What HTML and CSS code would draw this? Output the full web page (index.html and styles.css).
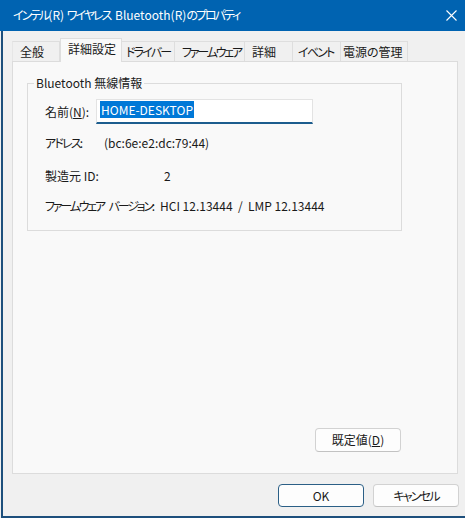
FILE: index.html
```html
<!DOCTYPE html>
<html lang="ja">
<head>
<meta charset="utf-8">
<title>プロパティ</title>
<link rel="stylesheet" href="styles.css">
</head>
<body>
<div class="window">
  <div class="titlebar">
    <span class="title"><span class="k">インテル</span>(R) <span class="k ks">ワイヤレス</span> Bluetooth(R)<span class="k">のプロパティ</span></span>
    <svg class="close" width="11" height="11" viewBox="0 0 11 11"><path d="M0.5 0.5L10.5 10.5M10.5 0.5L0.5 10.5" stroke="#fff" stroke-width="1.1" fill="none"/></svg>
  </div>
  <div class="frame">
    <div class="tabs">
      <div class="tab tab-w48">全般</div>
      <div class="tab tab-sel">詳細設定</div>
      <div class="tab tab-w53"><span class="k">ドライバー</span></div>
      <div class="tab tab-w70"><span class="k k2">ファームウェア</span></div>
      <div class="tab tab-w48">詳細</div>
      <div class="tab tab-w48"><span class="k">イベント</span></div>
      <div class="tab tab-w67">電源の管理</div>
    </div>
    <div class="panel">
      <fieldset class="group">
        <legend>Bluetooth 無線情報</legend>
        <div class="row row-name">
          <span class="lbl lbl-name">名前(<u>N</u>):</span>
          <div class="input"><span class="sel">HOME-DESKTOP</span></div>
        </div>
        <div class="row row-addr">
          <span class="lbl lbl-addr"><span class="k">アドレス</span>:</span>
          <span class="val">(bc:6e:e2:dc:79:44)</span>
        </div>
        <div class="row row-mfr">
          <span class="lbl lbl-mfr">製造元 ID:</span>
          <span class="val">2</span>
        </div>
        <div class="row row-fw">
          <span class="lbl lbl-fw"><span class="k k2 ks">ファームウェア</span> <span class="k k2">バージョン</span>:</span>
          <span class="val">HCI 12.13444 &nbsp;/&nbsp; LMP 12.13444</span>
        </div>
      </fieldset>
      <div class="panel-foot">
        <button class="btn btn-default">既定値(<u>D</u>)</button>
      </div>
    </div>
    <div class="footer">
      <button class="btn btn-ok">OK</button>
      <button class="btn btn-cancel"><span class="k">キャンセル</span></button>
    </div>
  </div>
</div>
</body>
</html>
```

FILE: styles.css
```css
* { box-sizing: border-box; }
html, body {
  margin: 0;
  padding: 0;
}
body {
  width: 465px;
  height: 518px;
  overflow: hidden;
  background: #f0f0f0;
  font-family: "Noto Sans CJK JP", "Noto Sans", sans-serif;
  font-feature-settings: "palt";
  font-size: 12px;
  color: #1a1a1a;
}
.k { letter-spacing: -1.8px; }
.k2 { letter-spacing: -2.2px; }
.ks { margin-right: 2px; }
.window {
  width: 465px;
  height: 518px;
  display: flex;
  flex-direction: column;
}
.titlebar {
  height: 31px;
  flex: none;
  background: #0063b1;
  color: #fff;
  display: flex;
  align-items: center;
  justify-content: space-between;
  padding: 0 8px 1px 13px;
}
.title {
  font-size: 12px;
  line-height: 16px;
  white-space: nowrap;
}
.title .k { letter-spacing: -2px; }
.close { display: block; margin-top: 1px; }
.frame {
  flex: 1;
  margin-left: 1px;
  border-left: 2px solid #1d4f7c;
  border-bottom: 2px solid #1d4f7c;
  padding: 7px 7px 0 9px;
  display: flex;
  flex-direction: column;
  background: #f0f0f0;
}
.tabs {
  display: flex;
  align-items: flex-end;
  height: 23px;
  position: relative;
  z-index: 1;
}
.tab {
  height: 20px;
  padding-left: 7px;
  line-height: 19px;
  border: 1px solid #dedede;
  border-bottom: none;
  border-left: none;
  background: #f0f0f0;
  white-space: nowrap;
  overflow: hidden;
  color: #1a1a1a;
}
.tab:first-child { border-left: 1px solid #e6e6e6; }
.tab-w48 { width: 48px; }
.tab-w53 { width: 53px; padding-left: 4px; }
.tab-w70 { width: 70px; }
.tab-w67 { width: 67px; padding-left: 2px; }
.tab-w48 .k { margin-left: -2px; }
.tab-sel {
  width: 62px;
  height: 24px;
  margin-bottom: -1px;
  background: #f9f9f9;
  border-left: 1px solid #dedede;
  line-height: 19px;
  padding-bottom: 4px;
}
.panel {
  height: 413px;
  flex: none;
  background: #f9f9f9;
  border: 1px solid #dcdcdc;
  display: flex;
  flex-direction: column;
  padding: 0 0 0 14px;
}
.group {
  margin: 13px 0 0 0;
  width: 375px;
  border: 1px solid #dcdcdc;
  padding: 8px 0 17px 17px;
  min-width: 0;
}
.group legend {
  padding: 0 2px;
  margin-left: -11px;
  line-height: 16px;
  color: #1a1a1a;
}
.row {
  display: flex;
  align-items: center;
  height: 16px;
  white-space: nowrap;
}
.row-name { height: 25px; }
.row-addr { margin-top: 10px; }
.row-mfr { margin-top: 17px; }
.row-fw { margin-top: 14px; }
.lbl { flex: none; }
.lbl-name { width: 51px; }
.lbl-addr { width: 59px; }
.lbl-mfr { width: 119px; }
.lbl-fw { width: 115px; }
.input {
  width: 217px;
  height: 25px;
  background: #fff;
  border: 1px solid #e3e3e3;
  border-bottom: 2px solid #1c5d8e;
  padding: 1px 0 0 3px;
  display: flex;
  align-items: flex-start;
}
.sel {
  background: #0078d7;
  color: #fff;
  line-height: 17px;
  padding: 0 1px;
}
.panel-foot {
  margin-top: auto;
  display: flex;
  justify-content: flex-end;
  padding: 0 56px 21px 0;
}
.btn {
  font-family: inherit;
  font-feature-settings: "palt";
  font-size: 12px;
  color: #1a1a1a;
  background: #fdfdfd;
  border: 1px solid #d2d2d2;
  border-bottom-color: #c2c2c2;
  border-radius: 4px;
  padding: 0;
  margin: 0;
  line-height: 16px;
}
.btn-default { width: 86px; height: 24px; }
.footer {
  display: flex;
  justify-content: flex-end;
  gap: 9px;
  padding-top: 10px;
  margin-right: -1px;
}
.btn-ok {
  width: 86px;
  height: 23px;
  border: 1px solid #2b5f86;
}
.btn-cancel {
  width: 86px;
  height: 23px;
}
```
